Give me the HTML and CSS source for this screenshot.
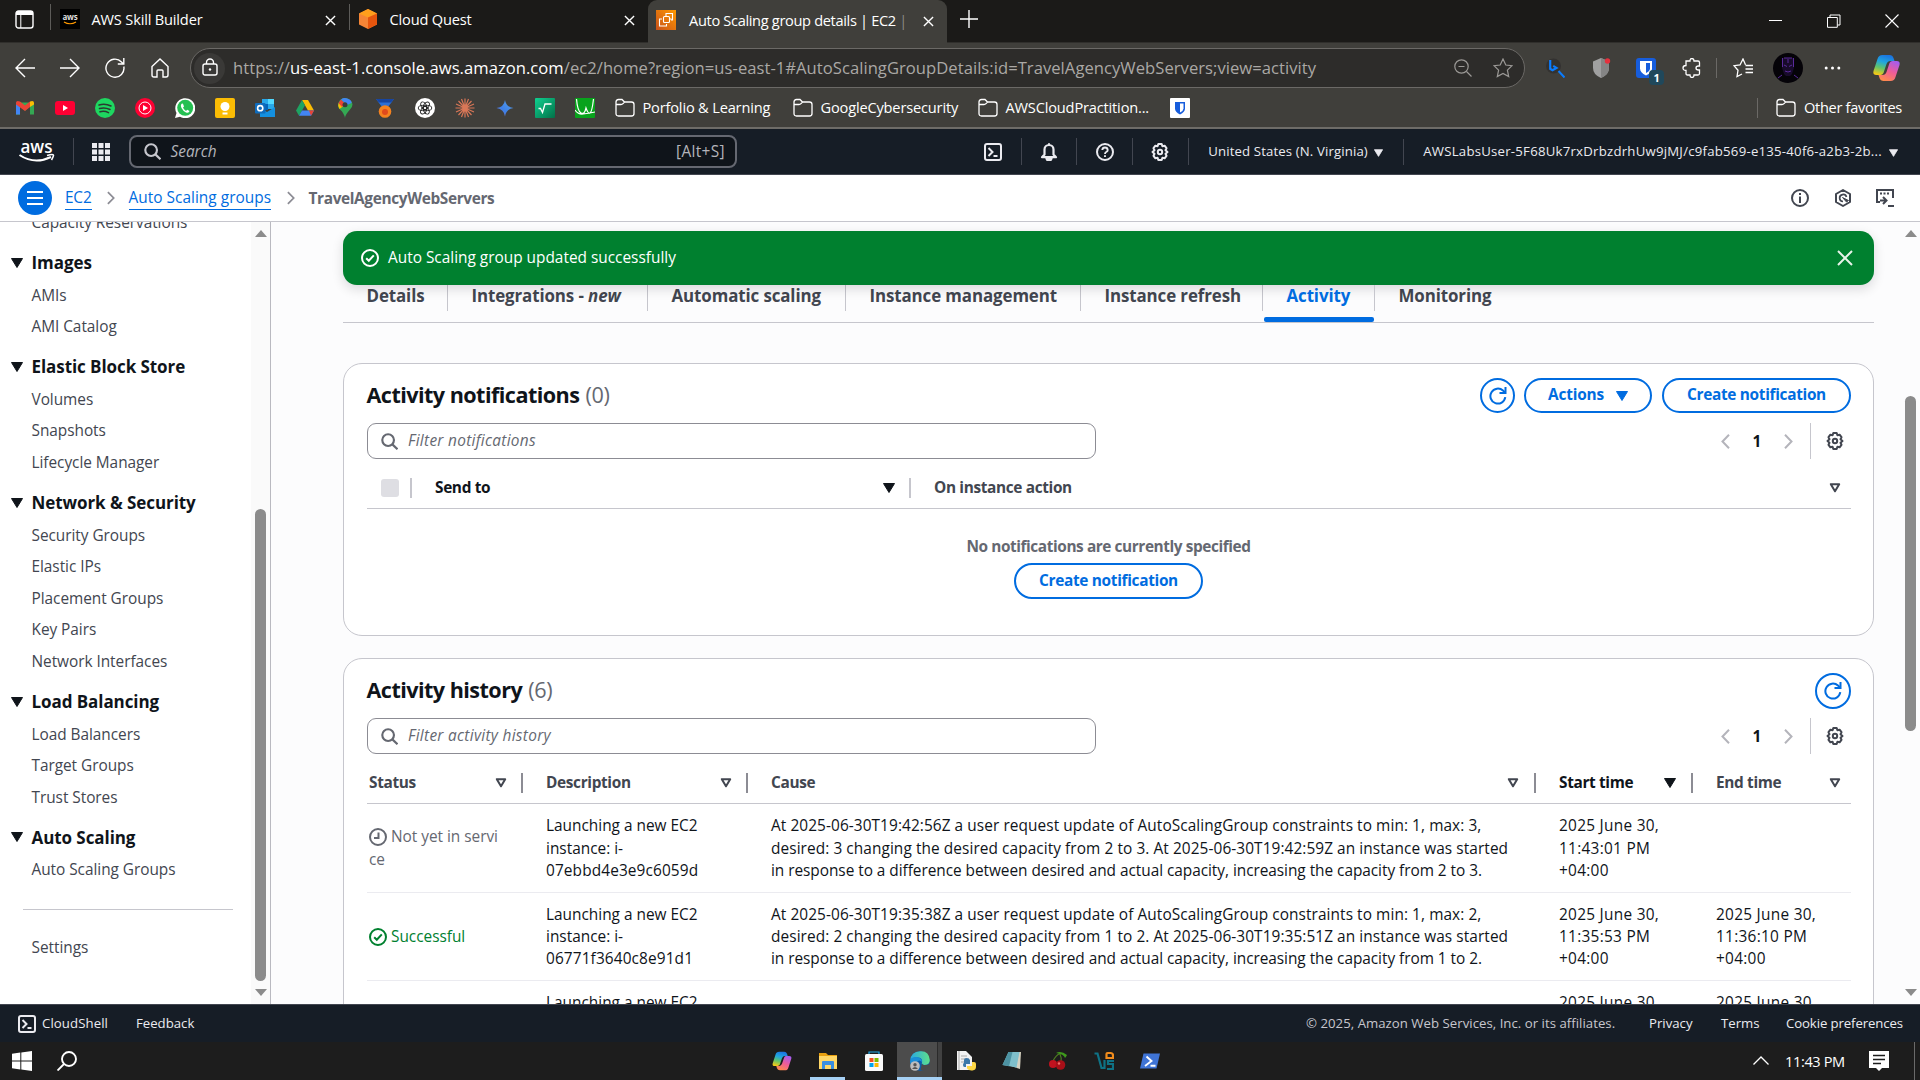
FILE: index.html
```html
<!DOCTYPE html>
<html lang="en">
<head>
<meta charset="utf-8">
<title>Auto Scaling group details | EC2 | us-east-1</title>
<link rel="stylesheet" href="styles.css">
</head>
<body>
<svg class="defs" aria-hidden="true">
  <defs>
    <linearGradient id="gOrange" x1="0" y1="1" x2="1" y2="0"><stop offset="0" stop-color="#c8511b"/><stop offset="1" stop-color="#f90"/></linearGradient>
    <linearGradient id="gGreen" x1="0" y1="0" x2="1" y2="1"><stop offset="0" stop-color="#0fd190"/><stop offset="1" stop-color="#027048"/></linearGradient>
    <linearGradient id="gGem" x1="0" y1="1" x2="1" y2="0"><stop offset="0" stop-color="#9a73b8"/><stop offset=".4" stop-color="#3d80e8"/><stop offset="1" stop-color="#5aa2e8"/></linearGradient>
    <linearGradient id="gCopA" x1="0.6" y1="0" x2="0.3" y2="1"><stop offset="0" stop-color="#1b74e0"/><stop offset=".35" stop-color="#20a5e0"/><stop offset=".65" stop-color="#5ec46e"/><stop offset="1" stop-color="#f5c916"/></linearGradient>
    <linearGradient id="gCopB" x1="0.8" y1="0" x2="0.3" y2="1"><stop offset="0" stop-color="#a35cf0"/><stop offset=".5" stop-color="#ee5c9a"/><stop offset="1" stop-color="#ff8a4c"/></linearGradient>
    <linearGradient id="gEdge" x1="0" y1="0" x2="1" y2="0"><stop offset="0" stop-color="#2aa9e0"/><stop offset="1" stop-color="#5ee08a"/></linearGradient>
  </defs>
  <symbol id="close" viewBox="0 0 12 12"><path d="M1 1l10 10M11 1L1 11" fill="none" stroke="currentColor" stroke-width="1.5"/></symbol>
  <symbol id="folder" viewBox="0 0 20 20"><path d="M1 4q0-2.500 2.500-2.500h3.500l2.500 2.500h7q2.500 0 2.500 2.500v9q0 2.500-2.500 2.500h-13q-2.500 0-2.500-2.500zM1 6.500h5q1.200 0 2-.9l1.500-1.600" fill="none" stroke="currentColor" stroke-width="1.300"/></symbol>
  <symbol id="shell" viewBox="0 0 18 18"><rect x="1" y="1" width="16" height="16" rx="2" fill="none" stroke="currentColor" stroke-width="2"/><path d="M4.500 5l4 4-4 4M9.500 13h4" fill="none" stroke="currentColor" stroke-width="2"/></symbol>
  <symbol id="gear" viewBox="0 0 18 18"><path d="M7.300 1h3.400l.7 2.200 2.200-.5 1.900 2.500-1 2.100 2 1.700-2 1.700 1 2.100-1.900 2.500-2.200-.5-.7 2.200H7.300l-.7-2.200-2.200.5-1.900-2.500 1-2.100L1.500 9l2-1.700-1-2.100 1.900-2.500 2.200.5z" fill="none" stroke="currentColor" stroke-width="2" stroke-linejoin="round"/><circle cx="9" cy="9" r="2.200" fill="none" stroke="currentColor" stroke-width="2"/></symbol>
  <symbol id="search" viewBox="0 0 16 16"><circle cx="6.700" cy="6.700" r="5.500" fill="none" stroke="currentColor" stroke-width="2"/><path d="M10.700 10.700l4.800 4.600" stroke="currentColor" stroke-width="2"/></symbol>
  <symbol id="check" viewBox="0 0 18 18"><circle cx="9" cy="9" r="8" fill="none" stroke="currentColor" stroke-width="2"/><path d="M5.200 9.200l2.600 2.600 5-5.400" fill="none" stroke="currentColor" stroke-width="2"/></symbol>
  <symbol id="clock" viewBox="0 0 18 18"><circle cx="9" cy="9" r="8" fill="none" stroke="currentColor" stroke-width="2"/><path d="M9.500 4.500v5.500H5" fill="none" stroke="currentColor" stroke-width="2"/></symbol>
  <symbol id="down" viewBox="0 0 12 10"><path d="M.5.500h11L6 9.500z" fill="currentColor" stroke="currentColor" stroke-linejoin="round"/></symbol>
  <symbol id="downo" viewBox="0 0 12 10"><path d="M1.800 1.200h8.400L6 8.300z" fill="none" stroke="currentColor" stroke-width="2" stroke-linejoin="round"/></symbol>
  <symbol id="left" viewBox="0 0 9 15"><path d="M8 .8L1.500 7.500 8 14.200" fill="none" stroke="currentColor" stroke-width="2"/></symbol>
  <symbol id="right" viewBox="0 0 9 15"><path d="M1 .8l6.500 6.700L1 14.200" fill="none" stroke="currentColor" stroke-width="2"/></symbol>
  <symbol id="refresh" viewBox="0 0 18 18"><path d="M16.300 10.200A7.500 7.500 0 1 1 14 3.600l2 1.900" fill="none" stroke="currentColor" stroke-width="2"/><path d="M16.500 0v6h-6" fill="none" stroke="currentColor" stroke-width="2"/></symbol>
  <symbol id="copilot" viewBox="0 0 28 28"><path d="M10 1h7q3 0 4 3l1 3h-4q-3 0-4 3l-3 9q-1 2-3 2H4q-4 0-3-4l4-12q1-4 5-4z" fill="url(#gCopA)"/><path d="M18 27h-7q-3 0-4-3l-1-3h4q3 0 4-3l3-9q1-2 3-2h4q4 0 3 4l-4 12q-1 4-5 4z" fill="url(#gCopB)"/></symbol>
</svg>

<div class="screen">
  <header class="browser">
    <div class="tabstrip">
      <svg class="workspaces" viewBox="0 0 19 19"><rect x="1" y="1" width="17" height="17" rx="2.500" fill="none" stroke="#fff" stroke-width="1.400"/><path d="M1 5V3q0-2 2-2h13q2 0 2 2v2z" fill="#fff"/><path d="M5.800 5v13" stroke="#fff"/></svg>
      <div class="tab tab-first">
        <svg class="favicon" viewBox="0 0 20 20"><rect width="20" height="20" fill="#000"/><text x="10" y="11" font-size="8" font-weight="700" text-anchor="middle" fill="#ddd">aws</text><path d="M4 13q6 3.500 12 0" fill="none" stroke="#f90" stroke-width="1.200"/></svg>
        <span class="tab-title">AWS Skill Builder</span>
        <svg class="x"><use href="#close"/></svg>
      </div>
      <div class="tab tab-second">
        <svg class="favicon" viewBox="0 0 20 20"><path d="M10 0l9 4.500v11L10 20l-9-4.500v-11z" fill="#f58536"/><path d="M10 0l9 4.500L10 8.500 1 4.500z" fill="#ff9f1c"/><path d="M19 4.500v11L10 20V8.500z" fill="#e6550d"/></svg>
        <span class="tab-title">Cloud Quest</span>
        <svg class="x"><use href="#close"/></svg>
      </div>
      <div class="tab tab-active">
        <svg class="favicon" viewBox="0 0 20 20"><rect width="20" height="20" fill="url(#gOrange)"/><g fill="none" stroke="#fff" stroke-width="1.100"><rect x="7.500" y="6.500" width="6" height="6" rx="1"/><path d="M10 5V3.500h6.500V10H15M6 9H3.500v7h7v-2M10 6.500v-2M13.500 9h2"/></g></svg>
        <span class="tab-title">Auto Scaling group details | EC2 <i class="fade">|</i></span>
        <svg class="x"><use href="#close"/></svg>
      </div>
      <svg class="plus" viewBox="0 0 18 18"><path d="M9 0v18M0 9h18" stroke="#fff" stroke-width="1.400"/></svg>
      <div class="winctl">
        <svg viewBox="0 0 14 14"><path d="M0 6.500h13" stroke="#fff"/></svg>
        <svg viewBox="0 0 14 14"><path d="M.5 3.500h9.800v9.800H.5zM3 3.500V1h10v10h-2.500" fill="none" stroke="#fff"/></svg>
        <svg viewBox="0 0 14 14"><path d="M.5.500l13 13M13.500.500l-13 13" stroke="#fff" stroke-width="1.100"/></svg>
      </div>
    </div>

    <div class="toolbar">
      <div class="navbtns">
        <svg viewBox="0 0 20 20"><path d="M20 10H1M10 1L1 10l9 9"/></svg>
        <svg viewBox="0 0 20 20"><path d="M0 10h19M10 1l9 9-9 9"/></svg>
        <svg viewBox="0 0 20 20"><path d="M18.800 8.500A9 9 0 1 1 16.500 4L18.500 6M18.800 0v6h-6"/></svg>
        <svg viewBox="0 0 20 20"><path d="M2 8.500L10 1l8 7.500V17q0 2-2 2h-3v-6q0-1-1-1H8q-1 0-1 1v6H4q-2 0-2-2z"/></svg>
      </div>
      <div class="urlbar">
        <span class="lock"><svg viewBox="0 0 16 18"><rect x="1" y="6" width="14" height="11" rx="2" fill="none" stroke="#fff" stroke-width="1.400"/><path d="M4.500 6V4.500a3.500 3.500 0 0 1 7 0V6" fill="none" stroke="#fff" stroke-width="1.400"/><circle cx="8" cy="11.500" r="1.200" fill="#fff"/></svg></span>
        <span class="url">https://<b>us-east-1.console.aws.amazon.com</b>/ec2/home?region=us-east-1#AutoScalingGroupDetails:id=TravelAgencyWebServers;view=activity</span>
        <svg class="ub-zoom" viewBox="0 0 18 18"><circle cx="7.500" cy="7.500" r="6.700"/><path d="M12.500 12.500l5 5M4.500 7.500h6"/></svg>
        <svg class="ub-star" viewBox="0 0 20 20"><path d="M10 1l2.800 6 6.200.7-4.600 4.400 1.300 6.500L10 15.500l-5.700 3.100 1.300-6.500L1 7.700 7.200 7z"/></svg>
      </div>
      <div class="exts">
        <svg viewBox="0 0 20 20"><circle cx="8.500" cy="8" r="7.500" fill="#333231"/><path d="M5.200 2v8.800l2.300 1.400 4-2.300-3.300-2" fill="none" stroke="#0a7cff" stroke-width="2.200"/><path d="M13.500 13l6 6.500" stroke="#0a7cff" stroke-width="2"/></svg>
        <svg viewBox="0 0 20 20"><path d="M10 0l8 3.500V10q0 6.500-8 10-8-3.500-8-10V3.500z" fill="#a0a0a0"/><path d="M10 0l8 3.500V10q0 6.500-8 10z" fill="#858585"/><circle cx="16.500" cy="3" r="2.700" fill="#e5303d"/></svg>
        <span class="bw"><svg viewBox="0 0 20 20"><rect width="20" height="20" rx="3" fill="#175ddc"/><path d="M4 3h12v7.500q0 4-6 7-6-3-6-7z" fill="#fff"/><path d="M10 5h4v5.500q0 2.500-4 4.600z" fill="#175ddc"/></svg><em>1</em></span>
        <svg viewBox="0 0 20 20"><path d="M4 3h4q0-2.500 2-2.500t2 2.500h4q1.500 0 1.500 1.500V8h-1q-2.500 0-2.500 2t2.500 2h1v3.500q0 1.500-1.500 1.500h-4q0 2.500-2 2.500T8 17H5.500Q4 17 4 15.500V12.500q-3 0-3-2.500t3-2.500z" fill="none" stroke="#fff" stroke-width="1.300"/></svg>
      </div>
      <i class="vsep"></i>
      <svg class="favs" viewBox="0 0 20 20"><path d="M12.500 6.800L10 1 7 7 1 7.700l4 4.600-1 6.200 5-2.500M12.500 7.500H20M12.500 11H20M12.500 14.500H20" fill="none" stroke="#fff" stroke-width="1.300"/></svg>
      <svg class="avatar" viewBox="0 0 30 30"><circle cx="15" cy="15" r="15" fill="#050308"/><path d="M9 5h12v10l-2 6-2 2h-4l-2-2-2-6z" fill="#180b2b"/><path d="M9.500 5v9M20.500 5v9M11 5h8M11 12l3 1.500M19 12l-3 1.500M12 18l3 1 3-1M5 25l4-3M25 25l-4-3M15 6v4" fill="none" stroke="#5a2a9c"/></svg>
      <svg class="dots" viewBox="0 0 16 4"><circle cx="1.700" cy="2" r="1.500"/><circle cx="8" cy="2" r="1.500"/><circle cx="14.300" cy="2" r="1.500"/></svg>
      <svg class="cop"><use href="#copilot"/></svg>
    </div>

    <div class="bookmarks">
      <div class="bm-icons">
        <svg viewBox="0 0 20 20"><path d="M1 4.500v12h4V9l5 4 5-4v7.500h4v-12z" fill="#34a853"/><path d="M1 5v11.500h4V9z" fill="#4285f4"/><path d="M5 8.800l5 4 5-4v4l-5 0-5 0z" fill="#403f3b"/><path d="M1 5q0-3 4-1.500l5 4 5-4V9l-5 4-9-6.500z" fill="#ea4335"/><path d="M15 3.500q4-1.500 4 1.500v1.500L15 9z" fill="#fbbc04"/></svg>
        <svg viewBox="0 0 20 20"><rect y="3" width="20" height="14" rx="3" fill="#ff0033"/><path d="M8 7v6l5-3z" fill="#fff"/></svg>
        <svg viewBox="0 0 20 20"><circle cx="10" cy="10" r="10" fill="#1ed760"/><path d="M4 7q6-2 12 1M4.500 10.500q5.500-1.500 10.500 1M5 13.700q4.500-1.200 8.500.9" fill="none" stroke="#2b3b30" stroke-width="1.600" stroke-linecap="round"/></svg>
        <svg viewBox="0 0 20 20"><circle cx="10" cy="10" r="10" fill="#ff0033"/><circle cx="10" cy="10" r="6" fill="none" stroke="#fff"/><path d="M8 7v6l5-3z" fill="#fff"/></svg>
        <svg viewBox="0 0 20 20"><path d="M0 20L1.500 15A10 10 0 1 1 5 18.700z" fill="#fff"/><circle cx="10.200" cy="9.800" r="8" fill="#25c052"/><path d="M7 5.500q-2 1.500-.5 4.500t4.500 4.500q3 1 3.500-1.500l-2.300-1.300-1.200 1.200Q8.500 11.500 8 9.500L9 8.500 8 5.700z" fill="#fff"/></svg>
        <svg viewBox="0 0 20 20"><rect width="20" height="20" rx="2" fill="#fbbc04"/><circle cx="10" cy="8.500" r="4.500" fill="#fff"/><path d="M7.500 14.500h5v2h-5z" fill="#fff"/></svg>
        <svg viewBox="0 0 20 20"><path d="M7 1h12v10H7z" fill="#28a8ea"/><path d="M13 1h6v5h-6z" fill="#50d9ff"/><path d="M7 6h6v6H7z" fill="#0364b8"/><path d="M5 10l7 4 8-5v10H5z" fill="#1490df"/><rect y="5" width="10.500" height="10.500" rx="1" fill="#0f6cbd"/><circle cx="5.200" cy="10.200" r="2.600" fill="none" stroke="#fff" stroke-width="1.600"/></svg>
        <svg viewBox="0 0 20 20"><path d="M7 2h6l6 10.500h-6z" fill="#fbbc04"/><path d="M7 2l3 5.200-6 10.500-3-5.200z" fill="#1ea362"/><path d="M7 12.500h12l-3 5.200H4z" fill="#4285f4"/><path d="M16 17.700l3-5.200h-5z" fill="#ea4335"/></svg>
        <svg viewBox="0 0 20 20"><path d="M10 20Q9 15 5 11.500T5 2q5-4 10 0t0 9.500T10 20z" fill="#34a853"/><path d="M3.500 5L8 8.500 4.500 11Q2.500 8 3.500 5z" fill="#fbbc04"/><path d="M3.500 5L6 1.500l4 4L7 9z" fill="#ea4335"/><path d="M6 1.500Q9-1 13 .8T16.500 5L12 7z" fill="#4285f4"/><circle cx="10" cy="6.800" r="2.500" fill="#3c3b39"/></svg>
        <svg viewBox="0 0 20 20"><path d="M1 1l6 8h6l6-8-4 1H5z" fill="#2b6fd6"/><path d="M1 1h18l-3 3.500H4z" fill="#1745a0"/><circle cx="10" cy="13.500" r="6.300" fill="#f5821f"/><circle cx="10" cy="14" r="3" fill="#e04a1c"/></svg>
        <svg viewBox="0 0 20 20"><circle cx="10" cy="10" r="10" fill="#fff"/><g fill="none" stroke="#222" stroke-width=".9"><ellipse cx="10" cy="7.500" rx="2.600" ry="4.200" transform="rotate(30 10 10)"/><ellipse cx="10" cy="7.500" rx="2.600" ry="4.200" transform="rotate(90 10 10)"/><ellipse cx="10" cy="7.500" rx="2.600" ry="4.200" transform="rotate(150 10 10)"/><ellipse cx="10" cy="7.500" rx="2.600" ry="4.200" transform="rotate(210 10 10)"/><ellipse cx="10" cy="7.500" rx="2.600" ry="4.200" transform="rotate(270 10 10)"/><ellipse cx="10" cy="7.500" rx="2.600" ry="4.200" transform="rotate(330 10 10)"/></g></svg>
        <svg viewBox="0 0 20 20"><path d="M10 .5v19M.5 10h19M3.500 3l13 14M16.500 3l-13 14M6.500 1l7 18M13.500 1l-7 18M1 6l18 8M19 6L1 14" stroke="#d97757" stroke-width="1.200"/></svg>
        <svg viewBox="0 0 20 20"><path d="M10 2q1 7 8.500 8Q11 11 10 18.500 9 11 1.500 10 9 9 10 2z" fill="url(#gGem)"/></svg>
        <svg viewBox="0 0 20 20"><rect width="20" height="20" rx="1" fill="url(#gGreen)"/><path d="M3.500 10.500h2l2 4 2.500-8.500h6.500" fill="none" stroke="#fff" stroke-width="1.300"/></svg>
        <svg viewBox="0 0 20 20"><rect width="20" height="20" rx="1" fill="#08a31c"/><path d="M1.500 1q1 12 4.500 14t5-5q2 6 4 5t3.500-14M0 12q3 4.500 8 4t12-2" fill="none" stroke="#fff" stroke-width="1.200"/></svg>
      </div>
      <div class="bm bm-1"><svg><use href="#folder"/></svg><span>Porfolio &amp; Learning</span></div>
      <div class="bm bm-2"><svg><use href="#folder"/></svg><span>GoogleCybersecurity</span></div>
      <div class="bm bm-3"><svg><use href="#folder"/></svg><span>AWSCloudPractition...</span></div>
      <svg class="bm-bw" viewBox="0 0 20 20"><rect width="20" height="20" rx="1" fill="#fff"/><path d="M5 4h10v6.500q0 3.500-5 6-5-2.500-5-6z" fill="#175ddc"/><path d="M10 5.500h3.500v5q0 2-3.500 4z" fill="#fff"/></svg>
      <div class="bm bm-other"><svg><use href="#folder"/></svg><span>Other favorites</span></div>
    </div>
  </header>

  <nav class="awsnav">
    <svg class="awslogo" viewBox="0 0 36 24"><text x="17.500" y="13.500" font-size="18.500" font-weight="600" text-anchor="middle" textLength="32" lengthAdjust="spacingAndGlyphs" fill="#fff">aws</text><path d="M.5 16q15 10 31.500 2" fill="none" stroke="#fff" stroke-width="2"/><path d="M28 16.500q7-2 6.500 0t-2 4.500" fill="none" stroke="#fff" stroke-width="1.500"/></svg>
    <i class="nsep"></i>
    <svg class="apps" viewBox="0 0 18 18"><path d="M0 0h5v5H0zM6.500 0h5v5h-5zM13 0h5v5h-5zM0 6.500h5v5H0zM6.500 6.500h5v5h-5zM13 6.500h5v5h-5zM0 13h5v5H0zM6.500 13h5v5h-5zM13 13h5v5h-5z"/></svg>
    <div class="navsearch"><svg><use href="#search"/></svg><em>Search</em><span>[Alt+S]</span></div>
    <div class="navicons">
      <span><svg><use href="#shell"/></svg></span>
      <span><svg viewBox="0 0 18 18"><path d="M4.500 11.500V6.500a4.500 4.500 0 0 1 9 0V11.500l2.500 2.700H2z" fill="none" stroke="currentColor" stroke-width="2.200" stroke-linejoin="round"/><path d="M6 15h6q-.5 3-3 3t-3-3zM9 0v3" fill="currentColor" stroke="currentColor" stroke-width="1.500"/></svg></span>
      <span><svg viewBox="0 0 18 18"><circle cx="9" cy="9" r="8" fill="none" stroke="currentColor" stroke-width="2"/><path d="M6.300 7q.2-2.500 2.700-2.500T11.700 7q0 1.300-1.500 2Q9 9.600 9 11M9 12.200v1.900" fill="none" stroke="currentColor" stroke-width="1.900"/></svg></span>
      <span><svg><use href="#gear"/></svg></span>
    </div>
    <div class="region">United States (N. Virginia)<svg><use href="#down"/></svg></div>
    <div class="user"><span>AWSLabsUser-5F68Uk7rxDrbzdrhUw9jMJ/c9fab569-e135-40f6-a2b3-2b...</span><svg><use href="#down"/></svg></div>
  </nav>

  <div class="crumbs">
    <span class="burger"><svg viewBox="0 0 16 16"><path d="M0 2h16M0 8h16M0 14h16" stroke="#fff" stroke-width="2"/></svg></span>
    <a class="c1">EC2</a><svg class="chev"><use href="#right"/></svg>
    <a class="c2">Auto Scaling groups</a><svg class="chev"><use href="#right"/></svg>
    <strong>TravelAgencyWebServers</strong>
    <div class="tools">
      <svg viewBox="0 0 18 18"><circle cx="9" cy="9" r="8" fill="none" stroke="currentColor" stroke-width="2"/><path d="M9 4v2M9 7.500V14" stroke="currentColor" stroke-width="2"/></svg>
      <svg viewBox="0 0 18 18"><path d="M9 1l7 4v8l-7 4-7-4V5z" fill="none" stroke="currentColor" stroke-width="2" stroke-linejoin="round"/><path d="M12.500 8A3.500 3.500 0 1 0 9 12.500" fill="none" stroke="currentColor" stroke-width="1.700"/><path d="M8.500 8.500l6 3-2 1.500z" fill="currentColor" stroke="currentColor"/></svg>
      <svg viewBox="0 0 18 18"><path d="M4 13H1V1h16v8M4 4.500h2M7.500 4.500h2M11 4.500h2M12 17h6" fill="none" stroke="currentColor" stroke-width="2"/><path d="M4 11.500h6M7 8l3.500 3.500L7 15" fill="none" stroke="currentColor" stroke-width="2"/></svg>
    </div>
  </div>

  <div class="workspace">
    <aside class="side">
      <div class="side-list">
        <a>Capacity Reservations</a>
        <h3><svg><use href="#down"/></svg>Images</h3>
        <a>AMIs</a><a>AMI Catalog</a>
        <h3><svg><use href="#down"/></svg>Elastic Block Store</h3>
        <a>Volumes</a><a>Snapshots</a><a>Lifecycle Manager</a>
        <h3><svg><use href="#down"/></svg>Network &amp; Security</h3>
        <a>Security Groups</a><a>Elastic IPs</a><a>Placement Groups</a><a>Key Pairs</a><a>Network Interfaces</a>
        <h3><svg><use href="#down"/></svg>Load Balancing</h3>
        <a>Load Balancers</a><a>Target Groups</a><a>Trust Stores</a>
        <h3><svg><use href="#down"/></svg>Auto Scaling</h3>
        <a>Auto Scaling Groups</a>
        <hr>
        <a>Settings</a>
      </div>
      <div class="sbar side-bar"><i class="up"></i><b></b><i class="dn"></i></div>
    </aside>

    <main class="main">
      <div class="content">
        <div class="flash"><svg class="fi"><use href="#check"/></svg><span>Auto Scaling group updated successfully</span><svg class="fx" viewBox="0 0 16 16"><path d="M1 1l14 14M15 1L1 15" stroke="#e8f3ea" stroke-width="2"/></svg></div>
        <div class="tabs">
          <span class="t1">Details</span><span class="t2">Integrations - <em>new</em></span><span class="t3">Automatic scaling</span><span class="t4">Instance management</span><span class="t5">Instance refresh</span><span class="t6 on">Activity</span><span class="t7">Monitoring</span>
        </div>

        <section class="card card-notes">
          <div class="card-head">
            <h2>Activity notifications <small>(0)</small></h2>
            <button class="round"><svg><use href="#refresh"/></svg></button>
            <button class="btn actions">Actions<svg><use href="#down"/></svg></button>
            <button class="btn">Create notification</button>
          </div>
          <div class="filter-row">
            <div class="filter"><svg><use href="#search"/></svg><em>Filter notifications</em></div>
            <div class="pager"><svg><use href="#left"/></svg><span>1</span><svg><use href="#right"/></svg><i></i><svg class="pg"><use href="#gear"/></svg></div>
          </div>
          <div class="thead notes-grid">
            <div class="cell"><i class="cb"></i></div>
            <div class="cell sorted">Send to<svg><use href="#down"/></svg></div>
            <div class="cell">On instance action<svg><use href="#downo"/></svg></div>
          </div>
          <div class="empty"><p>No notifications are currently specified</p><button class="btn">Create notification</button></div>
        </section>

        <section class="card card-history">
          <div class="card-head">
            <h2>Activity history <small>(6)</small></h2>
            <button class="round"><svg><use href="#refresh"/></svg></button>
          </div>
          <div class="filter-row">
            <div class="filter"><svg><use href="#search"/></svg><em>Filter activity history</em></div>
            <div class="pager"><svg><use href="#left"/></svg><span>1</span><svg><use href="#right"/></svg><i></i><svg class="pg"><use href="#gear"/></svg></div>
          </div>
          <div class="thead hist-grid">
            <div class="cell">Status<svg><use href="#downo"/></svg></div>
            <div class="cell">Description<svg><use href="#downo"/></svg></div>
            <div class="cell">Cause<svg><use href="#downo"/></svg></div>
            <div class="cell sorted">Start time<svg><use href="#down"/></svg></div>
            <div class="cell">End time<svg><use href="#downo"/></svg></div>
          </div>
          <div class="row hist-grid">
            <div class="st pending"><svg><use href="#clock"/></svg> Not yet in servi<br>ce</div>
            <div>Launching a new EC2<br>instance: i-<br><span class="iid">07ebbd4e3e9c6059d</span></div>
            <div>At 2025-06-30T19:42:56Z a user request update of AutoScalingGroup constraints to min: 1, max: 3,<br>desired: 3 changing the desired capacity from 2 to 3. At 2025-06-30T19:42:59Z an instance was started<br><span class="tight">in response to a difference between desired and actual capacity, increasing the capacity from 2 to 3.</span></div>
            <div class="tm">2025 June 30,<br>11:43:01 PM<br>+04:00</div>
            <div class="tm"></div>
          </div>
          <div class="row hist-grid">
            <div class="st ok"><svg><use href="#check"/></svg> Successful</div>
            <div>Launching a new EC2<br>instance: i-<br><span class="iid">06771f3640c8e91d1</span></div>
            <div>At 2025-06-30T19:35:38Z a user request update of AutoScalingGroup constraints to min: 1, max: 2,<br>desired: 2 changing the desired capacity from 1 to 2. At 2025-06-30T19:35:51Z an instance was started<br><span class="tight">in response to a difference between desired and actual capacity, increasing the capacity from 1 to 2.</span></div>
            <div class="tm">2025 June 30,<br>11:35:53 PM<br>+04:00</div>
            <div class="tm">2025 June 30,<br>11:36:10 PM<br>+04:00</div>
          </div>
          <div class="row last hist-grid">
            <div></div>
            <div>Launching a new EC2</div>
            <div></div>
            <div class="tm">2025 June 30,</div>
            <div class="tm">2025 June 30,</div>
          </div>
        </section>
      </div>
      <div class="sbar main-bar"><i class="up"></i><b></b><i class="dn"></i></div>
    </main>
  </div>

  <footer class="foot">
    <svg><use href="#shell"/></svg><span class="f-shell">CloudShell</span><span class="f-feed">Feedback</span>
    <span class="f-copy">© 2025, Amazon Web Services, Inc. or its affiliates.</span><span class="f-priv">Privacy</span><span class="f-terms">Terms</span><span class="f-cook">Cookie preferences</span>
  </footer>

  <div class="taskbar">
    <svg class="start" viewBox="0 0 20 20"><path d="M0 2.800l8.300-1.200v7.900H0zM9.300 1.400L20 0v9.500H9.300zM0 10.500h8.300v7.900L0 17.200zM9.300 10.500H20V20L9.300 18.600z" fill="#fff"/></svg>
    <svg class="tsearch" viewBox="0 0 20 20"><circle cx="12" cy="8" r="7" fill="none" stroke="#fff" stroke-width="1.900"/><path d="M7 13l-6.500 6.500" stroke="#fff" stroke-width="1.900"/></svg>
    <div class="apps-row">
      <span><svg><use href="#copilot"/></svg></span>
      <span class="open"><svg viewBox="0 0 20 20"><path d="M1 2h7l2 2h9v14H1z" fill="#e8a010"/><path d="M1 5h18v13H1z" fill="#ffd767"/><path d="M4 11q0-1 1-1h10q1 0 1 1v7h-3v-4H7v4H4z" fill="#3a8ee0"/></svg></span>
      <span><svg viewBox="0 0 20 20"><path d="M5 5V1h10v4" fill="none" stroke="#1fa8e8" stroke-width="1.200"/><rect x="1" y="3" width="18" height="17" rx="1.500" fill="#fafafa"/><path d="M5.500 7h4v4h-4z" fill="#f25022"/><path d="M10.500 7h4v4h-4z" fill="#7fba00"/><path d="M5.500 12h4v4h-4z" fill="#00a4ef"/><path d="M10.500 12h4v4h-4z" fill="#ffb900"/></svg></span>
      <span class="open active"><svg viewBox="0 0 20 20"><circle cx="10" cy="10" r="9.800" fill="#0c5cab"/><path d="M.3 9Q1 1 10 .2T19.800 9q0 5-5.500 5-3 0-2.500-2 1.500-5-4-5.500T.3 9z" fill="url(#gEdge)"/><path d="M0 11Q0 6 6 6q6 .3 6 5-3-3-5 0t2 7.500Q1 18 0 11z" fill="#1b8fd8"/><path d="M12 12q0 2 3 2 3.500 0 4-1l.5 2q-4 5-9 4z" fill="#4b4b4b"/><circle cx="5" cy="15" r="4.800" fill="#bdbdbd"/><circle cx="5" cy="13.700" r="1.700" fill="#555"/><path d="M2 18q3-4 6 0" fill="#555"/></svg></span>
      <span><svg viewBox="0 0 20 20"><path d="M1 0h9l6 6v13H1z" fill="#f2f2f2"/><path d="M3 0v19M5 5h6M5 8h8M5 11h5" stroke="#aaa"/><path d="M8 12V9q0-2 2.500-2T14 9v4h-4v3H8.500Q7 16 7 14t1-2z" fill="#3b77a8"/><path d="M20 13v3q0 3-3.500 3.500T11 17.500V15h5v-4h2q2 0 2 2z" fill="#ffd845"/></svg></span>
      <span><svg viewBox="0 0 20 20"><path d="M7 1h12l-1 17-9-3z" fill="#d5d0c0"/><path d="M6.500 1h11l-3 15.500-14-2.500z" fill="#7fc0cc"/><path d="M6.500 1h4L7 15.300.5 14z" fill="#4d93a3"/></svg></span>
      <span><svg viewBox="0 0 20 20"><path d="M5 10Q8 4 12 2.500M13 12q1-5-1-9" fill="none" stroke="#4f7d22" stroke-width="1.200"/><path d="M8 2q5-3 11 2-1 2-2 3-1-4-9-5z" fill="#3f9b1c"/><circle cx="5" cy="13" r="4" fill="#c1121f"/><circle cx="12.500" cy="14" r="4.800" fill="#a80f18"/><circle cx="11" cy="12.500" r="1.200" fill="#ef6a6a"/></svg></span>
      <span><svg viewBox="0 0 20 20"><path d="M.5 2.500h3l4 14.500h3V9M20 10h-6v3h5v5h-6" fill="none" stroke="#0f7285" stroke-width="2.200"/><path d="M12.500 7V3q0-1 1-1h3q2.500 0 2.500 2.500V7z" fill="none" stroke="#f28c1c" stroke-width="2.200"/></svg></span>
      <span><svg viewBox="0 0 20 20"><path d="M3.500 2.500H20L16.500 17.500H0z" fill="#3f74d6"/><path d="M6.500 5.500l5 4.500-6.500 5M10.500 14.800h5" fill="none" stroke="#fff" stroke-width="1.900"/></svg></span>
    </div>
    <svg class="tray" viewBox="0 0 16 9"><path d="M.5 8.500L8 1l7.500 7.500" fill="none" stroke="#fff" stroke-width="1.300"/></svg>
    <span class="clock">11:43 PM</span>
    <svg class="notif" viewBox="0 0 20 20"><path d="M0 0h20v17h-7l-3 3-3-3H0z" fill="#fff"/><path d="M4 4.500h12M4 8.500h12M4 12.500h8" stroke="#1d1d1d" stroke-width="1.400"/></svg>
    <i class="peek"></i>
  </div>
</div>
</body>
</html>
```
FILE: styles.css
```css
* { box-sizing: border-box; }
body { margin: 0; font-family: "Open Sans", "Noto Sans", sans-serif; }
svg { display: block; flex: none; font-family: "Open Sans", "Noto Sans", sans-serif; }
.defs { position: absolute; width: 0; height: 0; }
h2, h3, p { margin: 0; }
button { font: inherit; cursor: pointer; }

.screen { width: 1920px; height: 1080px; display: flex; flex-direction: column; overflow: hidden; }

/* Browser chrome */
.browser { flex: none; height: 129px; background: #403f3b; border-bottom: 2px solid #6e6c68; color: #fff; font-size: 14.6px; letter-spacing: -.17px; white-space: nowrap; }
.tabstrip { height: 43px; background: #1b1a18; display: flex; align-items: center; border-bottom: 1px solid #302f2c; }
.workspaces { width: 19px; height: 19px; margin: -3px 15px 0 15px; }
.tab { display: flex; align-items: center; height: 26px; margin-top: -8px; border-left: 1px solid #5d5c59; }
.tab .favicon { width: 20px; height: 20px; }
.tab-title { flex: 1; }
.tab .x { width: 11px; height: 11px; margin-top: 3px; }
.tab-first { width: 299px; margin-left: 1px; padding: 4px 13px 0 9px; }
.tab-second { width: 299px; padding: 4px 13px 0 8px; }
.tab .tab-title { padding-left: 11.500px; line-height: 20px; }
.tab-active { width: 299px; height: 43px; margin: 0; background: #403f3b; border: 0; border-radius: 9px 9px 0 0; padding: 0 13px 3px 8px; letter-spacing: -.33px; }
.tab.tab-active .tab-title { padding-left: 13px; }
.fade { font-style: normal; color: #8b8a87; }
.plus { width: 18px; height: 18px; margin: -4px auto 0 13px; }
.winctl { display: flex; gap: 44px; margin-right: 21px; }
.winctl svg { width: 14px; height: 14px; }

.toolbar { height: 50px; display: flex; align-items: center; }
.navbtns { display: flex; gap: 25px; margin: 0 20px 0 15px; }
.navbtns svg { width: 20px; height: 20px; fill: none; stroke: #fff; stroke-width: 1.4; }
.urlbar { width: 1335px; height: 40px; border: 1px solid #6b6966; border-radius: 20px; background: #2d2c2a; display: flex; align-items: center; padding-left: 3px; }
.lock { width: 31px; height: 31px; border-radius: 50%; background: #3a3937; display: grid; place-items: center; }
.lock svg { width: 16px; height: 18px; margin-top: -2px; }
.url { margin: -2px 0 0 8px; font-size: 16.6px; letter-spacing: .04px; color: #aaa8a5; }
.url b { font-weight: 400; color: #fff; }
.ub-zoom, .ub-star { fill: none; stroke: #9b9996; stroke-width: 1.2; }
.ub-zoom { width: 18px; height: 18px; margin-left: auto; }
.ub-star { width: 20px; height: 20px; margin: 0 11px 0 21px; }
.exts { display: flex; align-items: center; gap: 25.5px; margin-left: 20px; }
.exts svg { width: 20px; height: 20px; }
.bw { position: relative; }
.bw em { position: absolute; left: 13px; top: 12px; width: 15px; height: 15px; border-radius: 4px; background: #20485b; font: 700 11px/15px "Open Sans", sans-serif; text-align: center; }
.vsep { width: 1px; height: 20px; background: #6b6966; margin-left: 14px; }
.favs { width: 20px; height: 20px; margin-left: 16px; }
.avatar { width: 30px; height: 30px; margin-left: 20px; }
.dots { width: 17px; height: 4px; margin-left: 21px; fill: #fff; }
.cop { width: 29px; height: 28px; margin-left: 31px; }

.bookmarks { display: flex; align-items: center; height: 34px; margin-top: -2px; }
.bm-icons { display: flex; gap: 20px; padding-left: 15px; }
.bm-icons svg, .bm svg, .bm-bw { width: 20px; height: 20px; }
.bm { display: flex; align-items: center; }
.bm span { margin-left: 7.500px; margin-top: -2px; }
.bm-1 { width: 178px; margin-left: 20px; }
.bm-2 { width: 185px; }
.bm-3 { width: 192px; }
.bm-other { margin-left: auto; border-left: 1px solid #6b6966; padding: 0 18px 0 18px; letter-spacing: -.3px; }

/* AWS top bar */
.awsnav { flex: none; height: 46px; background: #161d26; border-bottom: 1px solid #424650; display: flex; align-items: center; color: #ebebf0; white-space: nowrap; }
.awslogo { width: 36px; height: 24px; margin: -1px 0 0 19px; overflow: visible; }
.nsep { width: 1px; height: 27px; background: #424650; margin-left: 18px; }
.apps { width: 18px; height: 18px; margin-left: 18px; fill: #ebebf0; }
.navsearch { width: 608px; height: 33px; margin: 0 0 0 19px; border: 2px solid #656871; border-radius: 8px; background: #0f141a; display: flex; align-items: center; padding: 0 10px 0 13px; color: #b4b4bb; font-size: 15.4px; }
.navsearch svg { width: 17px; height: 17px; color: #c6c6cd; }
.navsearch em { margin: -1px auto 0 9.500px; }
.navsearch span { letter-spacing: .37px; margin-top: -1px; }
.navicons { display: flex; margin-left: 229px; }
.navicons span { width: 55.700px; height: 27px; border-right: 1px solid #424650; display: grid; place-items: center; }
.navicons svg { width: 18px; height: 18px; }
.region, .user { display: flex; align-items: center; font-weight: 500; font-size: 13.2px; height: 26px; padding-bottom: 2px; }
.region { width: 215.500px; padding-left: 19.500px; letter-spacing: .13px; border-right: 1px solid #424650; }
.user { padding-left: 19px; letter-spacing: .235px; }
.region svg, .user svg { width: 9px; height: 8px; margin: 4px 0 0 6px; }
.user svg { margin-left: 7px; }

/* Breadcrumb bar */
.crumbs { flex: none; height: 47px; background: #fff; border-bottom: 1px solid #c6c6cd; display: flex; align-items: center; font-size: 15.4px; padding: 0 26px 0 18px; }
.burger { width: 34px; height: 34px; border-radius: 50%; background: #006ce0; display: grid; place-items: center; }
.burger svg { width: 16px; height: 16px; }
.crumbs a { color: #006ce0; line-height: 22px; border-bottom: 1px solid #006ce0; }
.c1 { margin-left: 13px; letter-spacing: -.18px; }
.chev { width: 8px; height: 16px; margin: 0 14px; color: #8c8c94; }
.c1 + .chev { margin-left: 15px; }
.c2 + .chev { margin-left: 15.500px; }
.c2 { letter-spacing: .03px; }
.crumbs strong { font-weight: 700; color: #656871; letter-spacing: -.36px; }
.tools { display: flex; gap: 24.5px; margin-left: auto; color: #424650; }
.tools svg { width: 18px; height: 18px; }

.workspace { flex: 1; min-height: 0; display: flex; }

/* Sidebar */
.side { width: 271px; flex: none; background: #fff; border-right: 1px solid #b9b9c0; display: flex; overflow: hidden; }
.side-list { flex: 1; margin-top: -15px; font-size: 15.4px; color: #424650; letter-spacing: -.04px; }
.side-list a { display: block; height: 31.65px; line-height: 31.65px; padding-left: 31.500px; }
.side-list h3 { display: flex; align-items: center; height: 32.4px; padding-bottom: 1.500px; margin-top: 8.500px; font-size: 17px; font-weight: 700; color: #0f141a; padding-left: 11px; letter-spacing: -.07px; }
.side-list h3 svg { width: 12px; height: 10px; margin-right: 8.500px; }
.side-list hr { border: 0; height: 1px; background: #c6c6cd; margin: 22.500px 18px 22.500px 23px; }
.sbar { display: flex; flex-direction: column; align-items: center; }
.side-bar { width: 19px; background: #fafafa; }
.sbar .up, .sbar .dn { border: 6.500px solid transparent; border-top: 0; border-bottom: 7px solid #8b8b8b; margin-top: 8px; }
.sbar .dn { border-top: 7px solid #8b8b8b; border-bottom: 0; margin-top: auto; margin-bottom: 8px; }
.sbar b { width: 11px; border-radius: 6px; background: #8b8b8b; }
.side-bar b { height: 472px; margin-top: 272px; }
.main-bar { width: 19px; }
.main-bar b { height: 335px; margin-top: 159px; }

/* Main column */
.main { flex: 1; min-width: 0; background: #fcfcfd; display: flex; overflow: hidden; }
.content { width: 1531px; margin: 9px 27px 0 72px; flex: none; }
.flash { position: relative; height: 54px; border-radius: 14px; background: #00802f; color: #fff; display: flex; align-items: center; padding: 0 21px 0 18px; font-weight: 500; font-size: 15.4px; box-shadow: 0 4px 12px rgba(0, 7, 22, .14); }
.fi { width: 18px; height: 18px; }
.flash span { margin: -1px auto 0 9px; }
.fx { width: 16px; height: 16px; }
.tabs { display: flex; height: 38px; border-bottom: 1px solid #c6c6cd; font-size: 16.9px; font-weight: 700; color: #424650; white-space: nowrap; }
.tabs span { height: 26px; line-height: 22px; padding-left: 23.500px; border-right: 1px solid #c6c6cd; letter-spacing: -.1px; }
.t1 { width: 105px; } .t2 { width: 200px; } .t3 { width: 198px; } .t4 { width: 235px; } .t5 { width: 182px; } .t6 { width: 112px; }
.tabs .t7 { border: 0; }
.tabs .on { color: #006ce0; position: relative; }
.tabs .on::after { content: ""; position: absolute; left: 1px; right: 0; top: 32px; height: 5px; border-radius: 2px; background: #006ce0; }

.card { background: #fff; border: 1px solid #c6c6cd; border-radius: 19px; padding: 14px 22px 0 23px; font-size: 15.4px; color: #0f141a; }
.card-notes { margin-top: 40px; height: 273px; }
.card-history { margin-top: 22px; height: 420px; }
.card-head { display: flex; align-items: center; height: 35px; }
.card-head h2 { font-size: 21.6px; font-weight: 700; line-height: 30px; margin: -1px auto 0 -.5px; letter-spacing: -.55px; }
.card-head small { font-size: 21.6px; font-weight: 400; color: #656871; letter-spacing: -.3px; margin-left: 1px; }
.btn { height: 35px; border: 2px solid #006ce0; border-radius: 18px; background: #fff; color: #006ce0; font-size: 15.4px; font-weight: 700; padding: 0 22px 2px; width: 189px; margin-left: 10px; display: flex; align-items: center; justify-content: center; white-space: nowrap; letter-spacing: -.32px; }
.btn.actions { width: 128px; margin-left: 9px; padding: 0 20px 2px; letter-spacing: -.2px; }
.btn svg { width: 12px; height: 10px; margin: 3px 0 0 12px; }
.round { width: 35px; height: 35px; border: 2px solid #006ce0; border-radius: 50%; background: #fff; color: #006ce0; padding: 0; display: grid; place-items: center; }
.card-history .round { width: 36px; height: 36px; }
.round svg { width: 18px; height: 18px; }
.filter-row { display: flex; justify-content: space-between; margin-top: 10px; height: 36px; }
.filter { width: 729px; border: 1px solid #8c8c94; border-radius: 9px; display: flex; align-items: center; padding-left: 13px; color: #656871; letter-spacing: .3px; }
.filter svg { width: 17px; height: 17px; }
.filter em { margin: -1px 0 0 10px; }
.pager { display: flex; align-items: center; color: #b4b4bb; padding-right: 7px; }
.pager svg { width: 9px; height: 15px; }
.pager span { width: 54px; text-align: center; color: #0f141a; font-weight: 700; }
.pager i { width: 1px; height: 36px; background: #c6c6cd; margin: 0 15px 0 17px; }
.pager .pg { width: 18px; height: 18px; color: #424650; }

.thead { display: grid; height: 50px; border-bottom: 1px solid #c6c6cd; font-weight: 700; color: #424650; letter-spacing: -.35px; }
.thead .cell { display: flex; align-items: center; justify-content: space-between; height: 20px; margin-top: 19px; border-right: 2px solid #8c8c94; padding: 0 14px 2px 23px; }
.thead .cell:last-child { border: 0; padding-right: 10px; }
.thead .sorted { color: #0f141a; }
.thead svg { width: 12px; height: 10px; margin-top: 2px; }
.notes-grid { grid-template-columns: 45px 499px 1fr; }
.notes-grid .cell { border-color: #c6c6cd; }
.notes-grid .cell:first-child { padding: 0 0 0 14px; }
.cb { width: 18px; height: 18px; border-radius: 3px; background: #dedee3; }
.hist-grid { grid-template-columns: 156px 225px 788px 157px 1fr; }
.hist-grid .cell:first-child { padding-left: 2px; }
.hist-grid .cell:nth-child(3), .hist-grid .cell:nth-child(4) { padding-right: 15px; }
.empty { display: flex; flex-direction: column; align-items: center; padding: 27px 1px 0 0; }
.empty p { font-weight: 700; color: #656871; line-height: 22px; letter-spacing: -.42px; }
.empty .btn { margin: 5px 0 0; height: 36px; }
.row { display: grid; align-items: center; height: 88.5px; padding-top: 2px; border-bottom: 1px solid #ebebf0; line-height: 22.3px; white-space: nowrap; }
.row > div { padding-left: 23px; }
.row > div:nth-child(3) { letter-spacing: .08px; }
.row .tight { letter-spacing: -.04px; }
.row .iid { letter-spacing: .12px; }
.row > .tm { letter-spacing: .28px; }
.row > .st { padding-left: 2px; letter-spacing: -.02px; }
.row .st svg { display: inline-block; width: 18px; height: 18px; vertical-align: -4px; }
.pending { color: #656871; }
.ok { color: #00802f; }
.row.last { align-items: start; padding-top: 11px; border: 0; }

/* Console footer */
.foot { flex: none; height: 38px; background: #161d26; border-top: 1px solid #424650; display: flex; align-items: center; color: #ebebf0; font-size: 13.2px; font-weight: 500; padding: 0 17px 2px 18px; white-space: nowrap; }
.foot svg { width: 18px; height: 18px; margin-top: 3px; }
.f-shell { width: 94px; margin-left: 6px; letter-spacing: .09px; }
.f-copy { margin-left: auto; width: 343px; font-weight: 400; color: #c6c6cd; letter-spacing: .03px; }
.f-priv { width: 72px; } .f-terms { width: 65px; } .f-cook { width: 117px; letter-spacing: -.1px; }

/* Windows taskbar */
.taskbar { flex: none; height: 38px; background: #1d1d1d; display: flex; align-items: center; }
.start { width: 20px; height: 20px; margin-left: 12px; }
.tsearch { width: 20px; height: 20px; margin-left: 25px; }
.apps-row { display: flex; height: 38px; gap: 1px; margin-left: 682px; }
.apps-row span { width: 45px; display: grid; place-items: center; }
.apps-row svg { width: 20px; height: 20px; }
.apps-row .open { background: linear-gradient(#a6d1f5, #a6d1f5) center bottom / 35px 3px no-repeat; }
.apps-row .active { background: linear-gradient(#a6d1f5, #a6d1f5) center bottom / 45px 3px no-repeat, linear-gradient(90deg, #4c4c4c 40px, #2b2b2b 40px, #2b2b2b 41px, #414141 41px); }
.tray { width: 16px; height: 9px; margin-left: auto; margin-top: -2px; }
.clock { margin: 0 24px 0 16px; width: 60px; color: #fff; font-size: 14.6px; letter-spacing: -.38px; white-space: nowrap; }
.notif { width: 20px; height: 20px; }
.peek { width: 1px; height: 38px; background: #6a6a6a; margin: 0 5px 0 25px; }
```
